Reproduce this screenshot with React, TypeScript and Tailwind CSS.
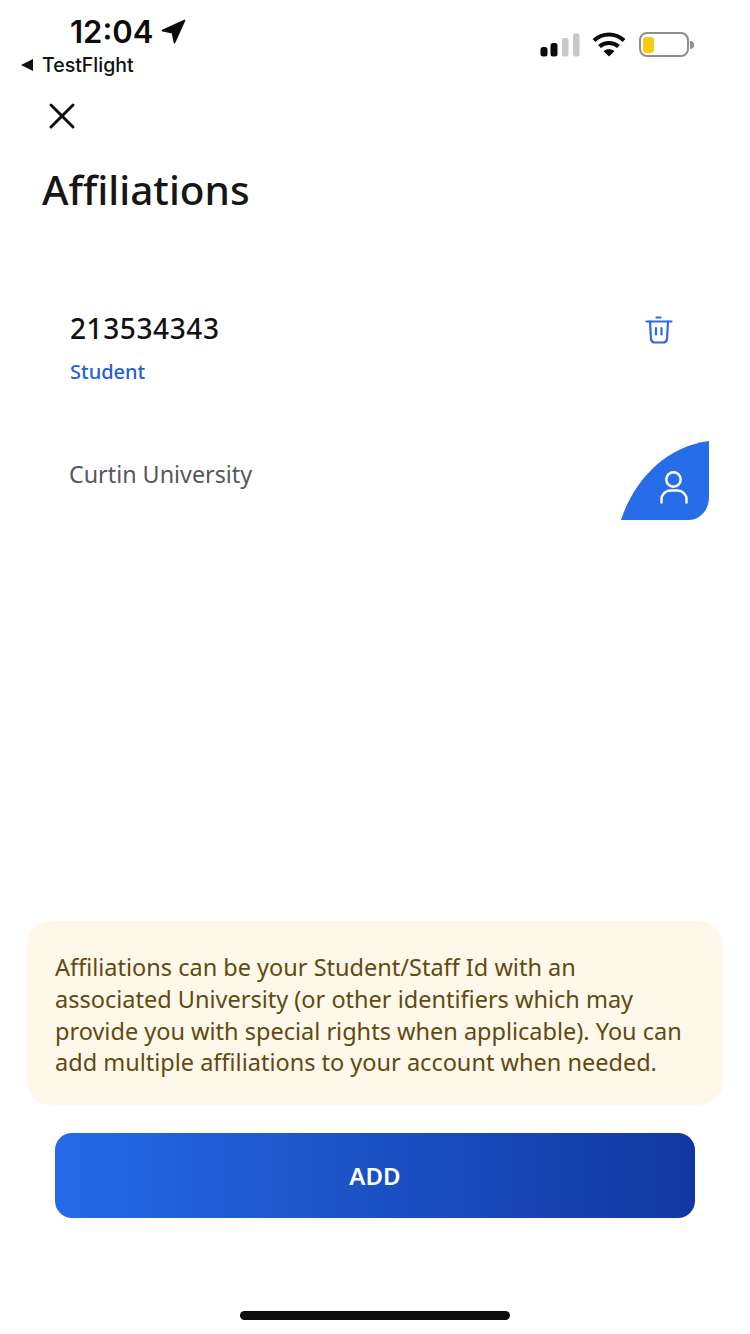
import { X } from 'lucide-react';

const NOTE_LINES = [
  'Affiliations can be your Student/Staff Id with an',
  'associated University (or other identifiers which may',
  'provide you with special rights when applicable). You can',
  'add multiple affiliations to your account when needed.',
];

function StatusBar() {
  return (
    <div className="flex h-[90px] shrink-0 items-start justify-between">
      <div className="pl-[21px]">
        <div className="flex h-[46px] items-center pl-[49px] pt-[17px]">
          <span className="font-['Inter',sans-serif] text-[31px] leading-[30px] font-semibold text-[#0c0c0c]">12:04</span>
          <svg className="ml-[8px] h-[25px] w-[25px]" viewBox="0 0 25 25">
            <path d="M23.5 1.5 L1.5 11.5 L11.5 13.5 L13.5 23.5 Z" fill="#0c0c0c" stroke="#0c0c0c" strokeWidth="1.8" strokeLinejoin="round" />
          </svg>
        </div>
        <div className="mt-[7px] flex items-center gap-[9px]">
          <svg className="h-[12px] w-[12px]" viewBox="0 0 12 12">
            <path d="M0 6 L12 0 L12 12 Z" fill="#111" />
          </svg>
          <span className="font-['Inter',sans-serif] text-[19.5px] leading-[24px] font-medium text-[#111]">TestFlight</span>
        </div>
      </div>
      <div className="flex items-center pt-[32px] pr-[56px]">
        <svg className="h-[24px] w-[40px]" viewBox="0 0 40 24">
          <rect x="0.5" y="14" width="7" height="9.5" rx="2.5" fill="#0c0c0c" />
          <rect x="10.5" y="10" width="7" height="13.5" rx="2.5" fill="#0c0c0c" />
          <rect x="22" y="5" width="6.5" height="18.5" rx="2" fill="#c8c8c8" />
          <rect x="33" y="0.5" width="6.5" height="23" rx="2" fill="#c8c8c8" />
        </svg>
        <svg className="ml-[12px] h-[25px] w-[34px]" viewBox="0 0 34 25" fill="none" stroke="#0c0c0c" strokeWidth="4.2">
          <path d="M2 8.5 C10.5 0.5 23.5 0.5 32 8.5" />
          <path d="M7.5 14.5 C12.8 9.8 21.2 9.8 26.5 14.5" />
          <path d="M17 24.5 L11.6 19.2 C14.5 16.6 19.5 16.6 22.4 19.2 Z" fill="#0c0c0c" stroke="none" />
        </svg>
        <div className="ml-[13px] flex items-center">
          <div className="flex h-[25px] w-[50px] items-center rounded-[8px] border-[2px] border-[#8e8e8e] p-[2px]">
            <div className="h-[16px] w-[11px] rounded-[3px] bg-[#f7cb11]" />
          </div>
          <div className="ml-[1px] h-[8px] w-[4px] rounded-r-full bg-[#8e8e8e]" />
        </div>
      </div>
    </div>
  );
}

function TrashIcon() {
  return (
    <svg className="mt-[6px] h-[28px] w-[28px] text-[#2b6cdc]" viewBox="0 0 28 28" fill="none" stroke="currentColor" strokeWidth="2.2" strokeLinecap="round" strokeLinejoin="round">
      <path d="M11.5 1.5 H15.5" />
      <path d="M1.5 5.5 H26.5" />
      <path d="M5 5.5 L6 23 A4 4 0 0 0 10 26.5 H18 A4 4 0 0 0 22 23 L23 5.5" />
      <path d="M11 12 V18.5" />
      <path d="M16.5 12 V18.5" />
    </svg>
  );
}

function PersonIcon() {
  return (
    <svg className="h-[33px] w-[28px]" viewBox="0 0 28 33" fill="none" stroke="#fff" strokeWidth="2.5" strokeLinecap="round">
      <circle cx="13.5" cy="8.5" r="7.2" />
      <path d="M1.5 31.5 V28.5 A9 9 0 0 1 10.5 19.5 H17.5 A9 9 0 0 1 26.5 28.5 V31.5" />
    </svg>
  );
}

export default function App() {
  return (
    <div className="flex h-[1334px] w-[750px] flex-col overflow-hidden bg-white font-['Noto_Sans',sans-serif]">
      <StatusBar />

      <div className="pt-[4px] pl-[40px]">
        <X size={44} strokeWidth={3} absoluteStrokeWidth className="text-[#111]" />
      </div>
      <h1 className="mt-[28px] pl-[42px] text-[40.5px] leading-[48px] font-medium text-[#161616]">Affiliations</h1>

      <div className="mt-[96px] flex items-start justify-between pr-[77px] pl-[70px]">
        <div>
          <p className="text-[28px] leading-[36px] font-medium tracking-[0.6px] text-[#111]">213534343</p>
          <p className="mt-[13px] text-[20px] leading-[26px] font-medium text-[#2560d8]">Student</p>
        </div>
        <TrashIcon />
      </div>

      <div className="mt-[56px] flex items-start justify-between pr-[41px] pl-[69px]">
        <p className="mt-[18px] text-[23.3px] leading-[30px] text-[#55585c]">Curtin University</p>
        <div className="flex h-[79px] w-[88px] items-end justify-end bg-[#276ce8] pr-[21px] pb-[16px] [clip-path:path('M0_79C12_42_42_6_88_0V56C88_70_78_79_68_79Z')]">
          <PersonIcon />
        </div>
      </div>

      <div className="mx-[27px] mt-auto rounded-[24px] bg-[#fdf8ea] px-[28px] pt-[31px] pb-[26px]">
        {NOTE_LINES.map((line) => (
          <p key={line} className="text-[23.5px] leading-[31.7px] whitespace-nowrap text-[#62490f]">
            {line}
          </p>
        ))}
      </div>

      <button className="mx-[55px] mt-[28px] flex h-[85px] items-center justify-center rounded-[17px] bg-gradient-to-r from-[#256ae9] to-[#1238a0] text-[24px] font-semibold text-white">
        ADD
      </button>

      <div className="mt-[93px] mb-[14px] h-[9px] w-[270px] self-center rounded-full bg-[#0c0c0c]" />
    </div>
  );
}
